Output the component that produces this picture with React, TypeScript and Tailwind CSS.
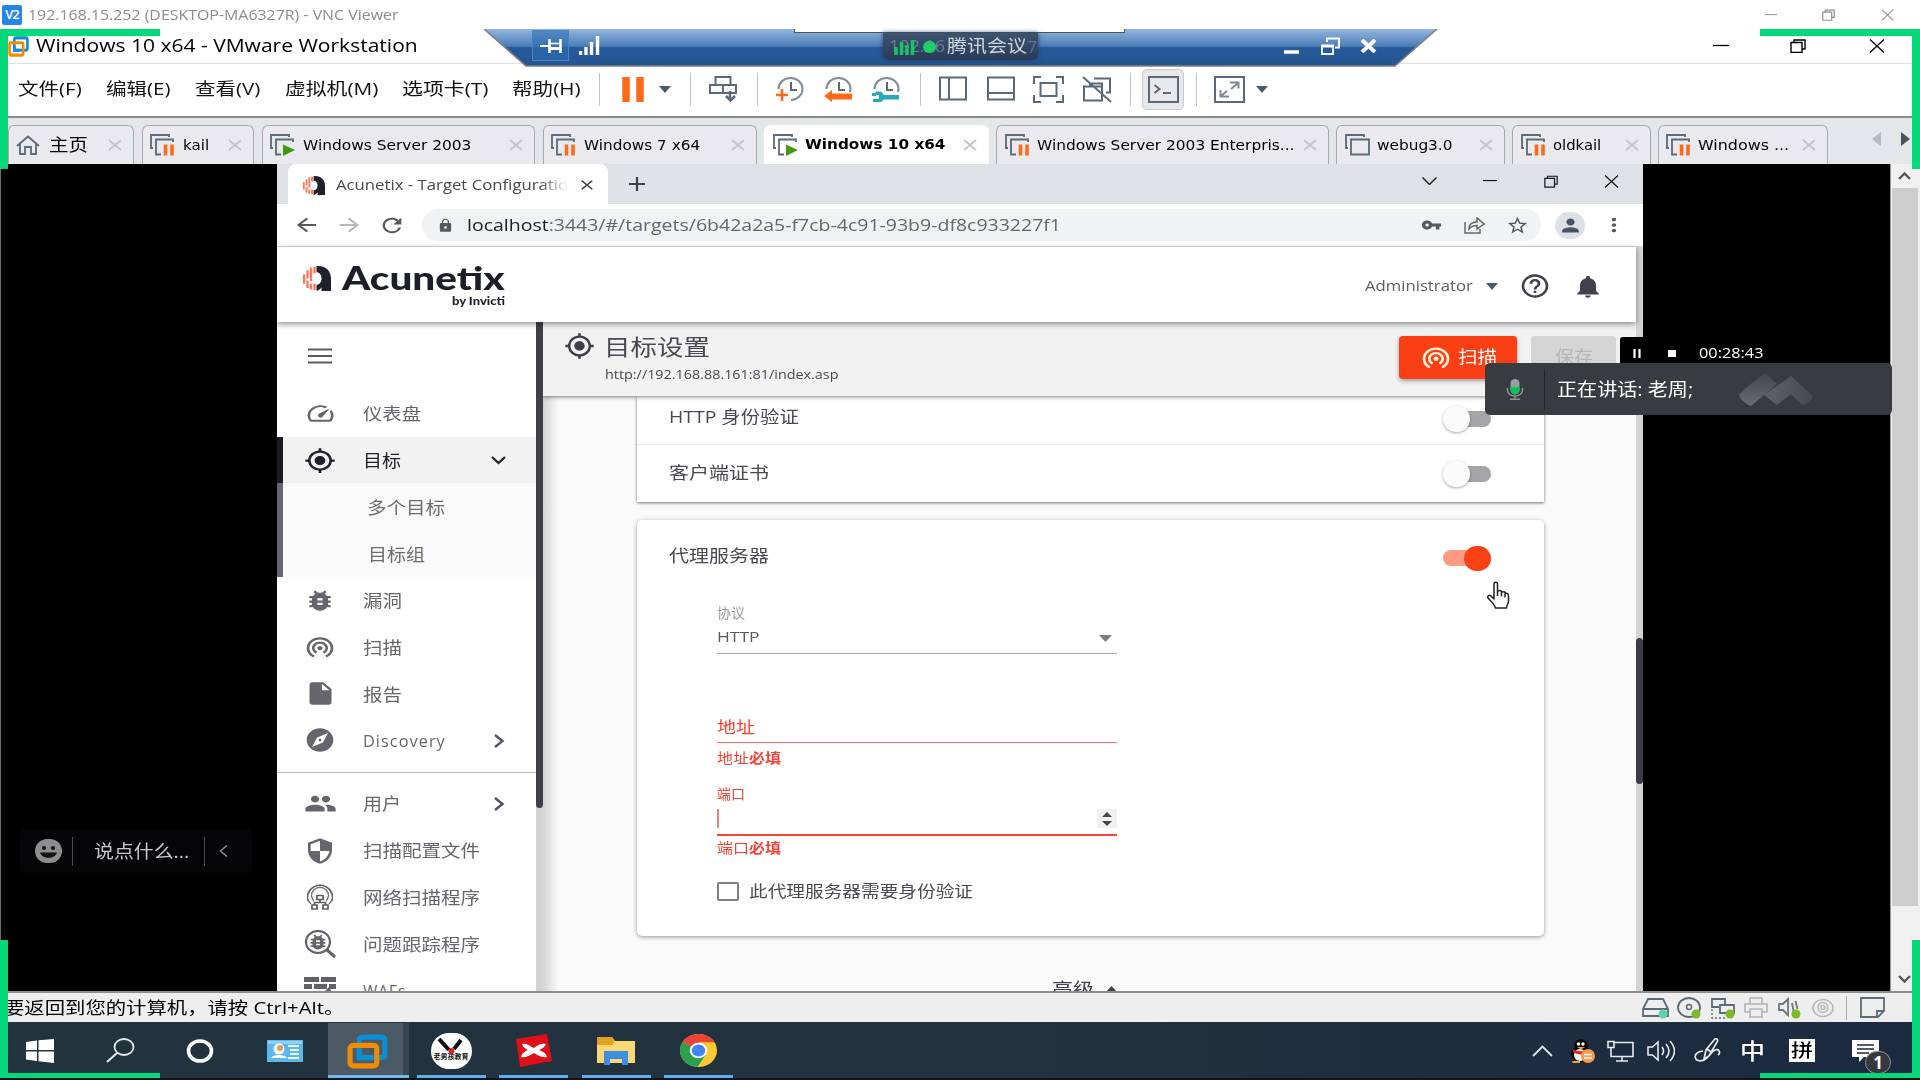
import React, { useLayoutEffect, useRef, useState } from "react";
import {
  MdArrowBack, MdArrowForward, MdBugReport, MdClose, MdExplore, MdGpsFixed, MdGroup, MdHelpOutline,
  MdInsertDriveFile, MdLock, MdMoreVert, MdNotifications, MdPerson, MdRefresh, MdSecurity,
  MdOutlineSpeed, MdStarBorder, MdVpnKey, MdWifiTethering,
} from "react-icons/md";

const sans = "font-['Open_Sans','Noto_Sans_CJK_SC',sans-serif]";
const tahoma = "font-['DejaVu_Sans','Noto_Sans_CJK_SC',sans-serif]";

/** One line of text stretched horizontally to fill the width of its box. */
function Fit({ className = "", children }: { className?: string; children: React.ReactNode }) {
  const box = useRef<HTMLSpanElement>(null);
  const text = useRef<HTMLSpanElement>(null);
  const [scale, setScale] = useState(1);
  useLayoutEffect(() => {
    if (box.current && text.current) setScale(box.current.clientWidth / text.current.offsetWidth);
  }, []);
  return (
    <span ref={box} className={`block shrink-0 leading-none ${className}`}>
      <span ref={text} className="inline-block origin-left whitespace-nowrap leading-[1.3]" style={{ transform: `scaleX(${scale})` }}>
        {children}
      </span>
    </span>
  );
}

function Svg({ w, h, className = "", children }: { w: number; h: number; className?: string; children: React.ReactNode }) {
  return (
    <svg width={w} height={h} viewBox={`0 0 ${w} ${h}`} fill="none" className={`shrink-0 ${className}`}>
      {children}
    </svg>
  );
}

const Minimize = ({ className = "" }) => <Svg w={16} h={16} className={className}><path d="M0 7.500h16" stroke="currentColor" strokeWidth="1.3" /></Svg>;
const Restore = ({ className = "" }) => (
  <Svg w={16} h={14} className={className}><path d="M1 3.5h11v10H1zM4 3V1h11v9h-3" stroke="currentColor" strokeWidth="1.4" /></Svg>
);
const Cross = ({ className = "" }) => <Svg w={16} h={14} className={className}><path d="M1 0.5l14 13M15 0.5L1 13.5" stroke="currentColor" strokeWidth="1.3" /></Svg>;

/* ---------- VNC and VMware title bars ---------- */

function VncTitle() {
  return (
    <div className="flex h-[29px] shrink-0 items-center bg-white text-[#8c8c8c]">
      <div className="ml-[2px] flex h-[20px] w-[20px] items-center justify-center rounded-[2px] bg-[#2486ea]">
        <span className="text-[13px] font-semibold leading-none tracking-[-1px] text-white">V2</span>
      </div>
      <Fit className="ml-[6px] w-[370px] text-[15px]">192.168.15.252 (DESKTOP-MA6327R) - VNC Viewer</Fit>
      <Minimize className="ml-auto h-[12px] w-[12px]" />
      <Restore className="ml-[45px] h-[12px] w-[13px]" />
      <Cross className="mr-[26px] ml-[46px] h-[12px] w-[13px]" />
    </div>
  );
}

function VmwareLogo({ w, h, className = "" }: { w: number; h: number; className?: string }) {
  return (
    <svg width={w} height={h} viewBox="0 0 40 34" preserveAspectRatio="none" fill="none" className={`shrink-0 ${className}`}>
      <rect x="12" y="3" width="25" height="20" rx="3" stroke="#0a8fd6" strokeWidth="5" />
      <rect x="3" y="11" width="26" height="20" rx="3" stroke="#f38b00" strokeWidth="5" />
      <path d="M12 15v8h9" stroke="#0a8fd6" strokeWidth="5" />
    </svg>
  );
}

function VmwareTitle() {
  return (
    <div className="flex h-[35px] shrink-0 items-center border-b border-[#e2e2e2] bg-white text-black">
      <VmwareLogo w={21} h={21} className="ml-[8px]" />
      <Fit className="ml-[7px] w-[382px] text-[18px]">Windows 10 x64 - VMware Workstation</Fit>
      <Minimize className="ml-auto" />
      <Restore className="ml-[61px]" />
      <Cross className="mr-[35px] ml-[63px]" />
    </div>
  );
}

function RdpBar() {
  return (
    <div className="absolute top-[29px] left-[483px] h-[38px] w-[955px]">
      <svg width="955" height="38" className="absolute inset-0">
        <defs>
          <linearGradient id="rdp" x1="0" y1="0" x2="0" y2="1">
            <stop offset="0" stopColor="#92b6df" />
            <stop offset="0.47" stopColor="#4c7db6" />
            <stop offset="0.49" stopColor="#275a9b" />
            <stop offset="1" stopColor="#25548f" />
          </linearGradient>
        </defs>
        <path d="M1 0H954L912 37H43Z" fill="url(#rdp)" />
        <path d="M1 0L43 37H912L954 0" fill="none" stroke="#7d7f84" strokeWidth="1.6" />
      </svg>
      <div className="relative flex h-[33px] items-center">
        <div className="ml-[49px] flex h-[31px] w-[37px] items-center justify-center border border-[#3f86cc] bg-[#2d6cb0]/60">
          <Svg w={22} h={16}><path d="M0 8h9" stroke="white" strokeWidth="2" /><path d="M9.500 1v14M20.500 1v14" stroke="white" strokeWidth="2.600" /><path d="M10 5.500h10" stroke="white" strokeWidth="1.600" /><path d="M10 10.500h10" stroke="white" strokeWidth="3" /></Svg>
        </div>
        <Svg w={22} h={19} className="ml-[10px]"><path d="M1.500 15v4M7 11v8M12.500 6v13M18.500 0v19" stroke="white" strokeWidth="3.400" /></Svg>
        <Svg w={15} h={16} className="ml-[683px]"><path d="M0 14h15" stroke="white" strokeWidth="3.500" /></Svg>
        <Svg w={19} h={18} className="ml-[22px]"><path d="M1 8.500h11v8.500H1zM1 9.500h11M6 5V1.500h12v9h-4" stroke="white" strokeWidth="1.800" /></Svg>
        <Svg w={17} h={14} className="ml-[20px]"><path d="M2 1l13 12M15 1L2 13" stroke="white" strokeWidth="4" /></Svg>
      </div>
      <div className="absolute top-0 left-[311px] h-[4px] w-[331px] border border-t-0 border-[#555] bg-white" />
      <div className="absolute top-[4px] left-[400px] flex h-[27px] w-[155px] items-center rounded-b-[6px] bg-gradient-to-b from-[#3d5470] to-[#263c58] shadow-[0_0_5px_#22406b]">
        <Fit className="absolute left-[6px] w-[56px] text-[17px] text-[#8193a9]/70">192.16</Fit>
        <span className="absolute right-[1px] text-[17px] text-[#8193a9]/60">7</span>
        <Svg w={21} h={16} className="relative ml-[11px]"><path d="M2 8v8M7.500 3v13M13 6v10M18.500 1v15" stroke="#18c465" strokeWidth="3.500" /></Svg>
        <span className="relative ml-[8px] h-[12px] w-[13px] rounded-full bg-[#1fd069]" />
        <Fit className="relative ml-[11px] w-[80px] text-[17px] text-[#cfd5dc]">腾讯会议</Fit>
      </div>
    </div>
  );
}

/* ---------- VMware menu, toolbar and tabs ---------- */

const Sep = ({ className = "" }) => <span className={`h-[33px] w-px shrink-0 bg-[#bfc3c6] ${className}`} />;
const Caret = ({ className = "" }) => <Svg w={12} h={7} className={className}><path d="M0 0h12L6 7z" fill="#4d5b67" /></Svg>;
const line = "#5b6a76";

function Clock({ className, children }: { className: string; children: React.ReactNode }) {
  return (
    <Svg w={28} h={26} className={className}>
      <path d="M2.500 13A12 11 0 1 1 15 24" stroke="#818b94" strokeWidth="2" />
      <path d="M15 6v8h6" stroke={line} strokeWidth="2" />
      {children}
    </Svg>
  );
}

function MenuBar() {
  return (
    <div className="flex h-[54px] shrink-0 items-center border-b-2 border-[#8b8b8b] bg-white pb-[2px] text-[17px] text-[#111]">
      <Fit className="ml-[18px] w-[64px]">文件(F)</Fit>
      <Fit className="ml-[24px] w-[64px]">编辑(E)</Fit>
      <Fit className="ml-[25px] w-[65px]">查看(V)</Fit>
      <Fit className="ml-[25px] w-[93px]">虚拟机(M)</Fit>
      <Fit className="ml-[24px] w-[86px]">选项卡(T)</Fit>
      <Fit className="ml-[24px] w-[69px]">帮助(H)</Fit>
      <Sep className="ml-[18px]" />
      <Svg w={22} h={25} className="ml-[22px]"><path d="M4 0v25M18 0v25" stroke="#ff6a1a" strokeWidth="7.500" /></Svg>
      <Caret className="ml-[15px]" />
      <Sep className="ml-[19px]" />
      <Svg w={29} h={26} className="ml-[18px]">
        <path d="M6.500 1h15v8h-15zM1 9h13v8H1zM14 9h13v8H14z" stroke={line} strokeWidth="2" />
        <path d="M21 15v9M17 20l4.500 4.500L26 20" stroke={line} strokeWidth="2.500" />
      </Svg>
      <Sep className="ml-[19px]" />
      <Clock className="ml-[18px]"><path d="M0 19h12M6 13v12" stroke="#ff6a1a" strokeWidth="2.600" /></Clock>
      <Clock className="ml-[20px]">
        <path d="M0 20h12v6h16v-10h-16z" fill="white" />
        <path d="M0 20l8-6v3.500h20v6H8V26z" fill="#ff6a1a" />
      </Clock>
      <Clock className="ml-[20px]">
        <path d="M0 16h28v10H0z" fill="white" />
        <path d="M0 17h4v3h-4M4 15.500h5l3 3.500h15v4.500H12l-3 2.500H1v-3h6v-4H2z" fill="#27aab8" />
      </Clock>
      <Sep className="ml-[20px]" />
      <Svg w={28} h={26} className="ml-[18px]"><path d="M1 1.500h26v22H1zM10 1.500v22" stroke={line} strokeWidth="2" /></Svg>
      <Svg w={28} h={26} className="ml-[20px]"><path d="M1 1.500h26v22H1zM1 17h26" stroke={line} strokeWidth="2" /></Svg>
      <Svg w={31} h={27} className="ml-[18px]"><path d="M1 8V1h7M23 1h7v7M30 19v7h-7M8 26H1v-7M7.500 7h16v13h-16z" stroke={line} strokeWidth="2" /></Svg>
      <Svg w={30} h={27} className="ml-[18px]"><path d="M12 2.500h16v14h-4M2 10.500h18v14H2zM8 10.500v-3h12v14M1 1l28 25" stroke={line} strokeWidth="2" /></Svg>
      <Sep className="ml-[18px]" />
      <div className="ml-[11px] flex h-[41px] w-[42px] items-center justify-center rounded-[5px] border border-[#c9c9cc] bg-[#e8e8ec]">
        <Svg w={31} h={27}><path d="M1 1h29v25H1z" stroke={line} strokeWidth="2" /><path d="M6.500 9l5 4-5 4M15 17h8" stroke={line} strokeWidth="2" /></Svg>
      </div>
      <Sep className="ml-[12px]" />
      <Svg w={31} h={27} className="ml-[17px]"><path d="M1 1h29v25H1z" stroke={line} strokeWidth="2" /><path d="M16 6.500h8.500v6M24 7l-7 6M6.500 14v6.500H15M7 20l6-5" stroke="#7e8992" strokeWidth="2" /></Svg>
      <Caret className="ml-[11px]" />
    </div>
  );
}

function VmIcon({ state, className = "" }: { state: "pause" | "play" | "off"; className?: string }) {
  return (
    <Svg w={25} h={22} className={className}>
      <path d="M3 14H1V1h18v2" stroke={line} strokeWidth="1.800" />
      {state === "off" ? <path d="M6 5.500h18v15H6z" stroke={line} strokeWidth="1.800" /> : <path d="M11 20.500H6v-15h17V8" stroke={line} strokeWidth="1.800" />}
      {state === "pause" && <path d="M15.500 10.500v11M22 10.500v11" stroke="#ff6a1a" strokeWidth="3.600" />}
      {state === "play" && <path d="M13 10.500l12 5.500-12 6z" fill="#3f9a12" />}
    </Svg>
  );
}

const TabX = ({ className = "" }) => <Svg w={14} h={12} className={`ml-auto ${className}`}><path d="M1 1l12 10M13 1L1 11" stroke="#c3c6c8" strokeWidth="2" /></Svg>;
const tabCls = "flex h-[39px] shrink-0 items-center rounded-t-[6px] border border-b-0 border-[#a7a9ab] bg-[#eaeaee]";

function VmTabs() {
  return (
    <div className={`flex h-[46px] shrink-0 items-end bg-[#e3e7e9] text-[14.5px] text-black ${tahoma}`}>
      <div className={`${tabCls} ml-[8px] w-[126px]`}>
        <Svg w={24} h={20} className="ml-[7px]"><path d="M1 11L12 1.500 23 11M4 9v10h5v-7h6v7h5V9" stroke={line} strokeWidth="1.800" /></Svg>
        <Fit className="ml-[9px] w-[39px] text-[17px]">主页</Fit>
        <TabX className="mr-[11px]" />
      </div>
      <div className={`${tabCls} ml-[8px] w-[112px]`}>
        <VmIcon state="pause" className="ml-[7px]" /><Fit className="ml-[8px] w-[26px]">kail</Fit><TabX className="mr-[11px]" />
      </div>
      <div className={`${tabCls} ml-[8px] w-[273px]`}>
        <VmIcon state="play" className="ml-[7px]" /><Fit className="ml-[8px] w-[168px]">Windows Server 2003</Fit><TabX className="mr-[11px]" />
      </div>
      <div className={`${tabCls} ml-[8px] w-[214px]`}>
        <VmIcon state="pause" className="ml-[7px]" /><Fit className="ml-[8px] w-[116px]">Windows 7 x64</Fit><TabX className="mr-[11px]" />
      </div>
      <div className="ml-[7px] flex h-[39px] w-[225px] shrink-0 items-center rounded-t-[6px] bg-white">
        <VmIcon state="play" className="ml-[9px]" /><Fit className="ml-[7px] w-[140px] font-bold">Windows 10 x64</Fit><TabX className="mr-[12px]" />
      </div>
      <div className={`${tabCls} ml-[7px] w-[333px]`}>
        <VmIcon state="pause" className="ml-[8px]" /><Fit className="ml-[7px] w-[258px]">Windows Server 2003 Enterpris...</Fit><TabX className="mr-[11px]" />
      </div>
      <div className={`${tabCls} ml-[7px] w-[169px]`}>
        <VmIcon state="off" className="ml-[8px]" /><Fit className="ml-[7px] w-[75px]">webug3.0</Fit><TabX className="mr-[11px]" />
      </div>
      <div className={`${tabCls} ml-[7px] w-[139px]`}>
        <VmIcon state="pause" className="ml-[8px]" /><Fit className="ml-[7px] w-[48px]">oldkail</Fit><TabX className="mr-[11px]" />
      </div>
      <div className={`${tabCls} ml-[7px] w-[170px]`}>
        <VmIcon state="pause" className="ml-[7px]" /><Fit className="ml-[7px] w-[91px]">Windows ...</Fit><TabX className="mr-[11px]" />
      </div>
      <div className="ml-[44px] flex h-[50px] items-center gap-[20px]">
        <Svg w={9} h={14}><path d="M9 0v14L0 7z" fill="#b4bbc1" /></Svg>
        <Svg w={9} h={14}><path d="M0 0v14l9-7z" fill="#475562" /></Svg>
      </div>
    </div>
  );
}

/* ---------- Chrome ---------- */

function AcuMark({ w, h, className = "" }: { w: number; h: number; className?: string }) {
  return (
    <svg width={w} height={h} viewBox="0 0 28 24" preserveAspectRatio="none" fill="none" className={`shrink-0 ${className}`}>
      <path d="M1 8v9M4.500 4v8M4.500 14v7M8 1.500v13M8 17v5.500M11.500 1v6M11.500 17v6" stroke="#f9785c" strokeWidth="2.400" />
      <path d="M13.500 0h2C23 0 28 5 28 12v12h-9.500v-3.500c-1.500 2-3 3.500-5 3.500v-6c3 0 5-2.500 5-6s-2-6-5-6z" fill="#1f222d" />
    </svg>
  );
}

function ChromeTabs() {
  return (
    <div className="flex h-[40px] shrink-0 bg-[#dee1e6] text-[#3c4043]">
      <div className="ml-[11px] flex h-[40px] w-[320px] items-center rounded-t-[8px] bg-white pt-[2px]">
        <AcuMark w={22} h={19} className="ml-[15px]" />
        <Fit className="ml-[11px] w-[232px] text-[15px] text-[#45494d] [mask-image:linear-gradient(to_right,black_88%,transparent)]">Acunetix - Target Configuratio</Fit>
        <MdClose preserveAspectRatio="none" className="ml-[9px] h-[16px] w-[20px]" />
      </div>
      <Svg w={16} h={14} className="mt-[13px] ml-[21px]"><path d="M0 7h16M8 0v14" stroke="#3c4043" strokeWidth="2.200" /></Svg>
      <div className="ml-auto flex h-[34px] items-center text-[#15171a]">
        <Svg w={15} h={8}><path d="M0.500 0.500l7 7 7-7" stroke="currentColor" strokeWidth="1.400" /></Svg>
        <Minimize className="ml-[46px] w-[14px]" />
        <Restore className="ml-[47px] h-[13px] w-[14px]" />
        <Cross className="mr-[24px] ml-[46px] h-[13px] w-[15px]" />
      </div>
    </div>
  );
}

function ChromeToolbar() {
  return (
    <div className="flex h-[43px] shrink-0 items-center border-b border-[#dadce0] bg-white text-[#55595e]">
      <MdArrowBack preserveAspectRatio="none" className="ml-[15px] h-[22px] w-[29px]" />
      <MdArrowForward preserveAspectRatio="none" className="ml-[14px] h-[22px] w-[29px] text-[#b5b7ba]" />
      <MdRefresh preserveAspectRatio="none" className="ml-[14px] h-[23px] w-[28px]" />
      <div className="ml-[16px] flex h-[32px] w-[1119px] items-center rounded-full bg-[#f1f2f3]">
        <MdLock preserveAspectRatio="none" className="ml-[15px] h-[15px] w-[17px]" />
        <Fit className="ml-[13px] w-[594px] text-[17px] text-[#63676c]"><span className="text-[#202124]">localhost</span>:3443/#/targets/6b42a2a5-f7cb-4c91-93b9-df8c933227f1</Fit>
        <MdVpnKey preserveAspectRatio="none" className="ml-auto h-[18px] w-[21px]" />
        <Svg w={21} h={17} className="ml-[22px]"><path d="M1 5v11h15v-4M5 12c0-5 3-7 8-7V1l7 6-7 5V8.500c-4 0-6 1-8 3.500z" stroke="#63676c" strokeWidth="1.500" /></Svg>
        <MdStarBorder preserveAspectRatio="none" className="mr-[12px] ml-[21px] h-[21px] w-[23px]" />
      </div>
      <span className="ml-[14px] flex h-[27px] w-[30px] items-center justify-center rounded-full bg-[#dde1e6]">
        <MdPerson preserveAspectRatio="none" className="h-[21px] w-[25px] text-[#4a5468]" />
      </span>
      <MdMoreVert preserveAspectRatio="none" className="ml-[16px] h-[22px] w-[26px]" />
    </div>
  );
}

function AppHeader() {
  return (
    <div className="relative z-20 flex h-[75px] w-[1359px] shrink-0 bg-white shadow-[0_2px_6px_rgba(0,0,0,0.45)]">
      <AcuMark w={28} h={25} className="mt-[19px] ml-[26px]" />
      <div className="mt-[10px] ml-[11px] w-[163px] font-['Lato','Noto_Sans',sans-serif] text-[#1c1e29]">
        <Fit className="w-[163px] text-[32px] font-black">Acunetix</Fit>
        <Fit className="mt-[-6px] ml-[110px] w-[53px] text-[12px] font-black">by Invicti</Fit>
      </div>
      <div className="mr-[32px] ml-auto flex h-[78px] items-center text-[#41404d]">
        <Fit className="w-[108px] text-[15px] text-[#5d5c66]">Administrator</Fit>
        <Caret className="ml-[13px]" />
        <MdHelpOutline preserveAspectRatio="none" className="ml-[21px] h-[28px] w-[32px]" />
        <MdNotifications preserveAspectRatio="none" className="ml-[21px] h-[27px] w-[32px]" />
      </div>
    </div>
  );
}

/* ---------- Sidebar ---------- */

const NetScan = () => (
  <Svg w={28} h={26}>
    <path d="M5 20A12.500 11 0 1 1 23 20M8 17A8.500 8 0 1 1 20 17M2 17A13.500 13 0 0 1 14 1A13.500 13 0 0 1 26 17" stroke="#67666f" strokeWidth="1.300" />
    <path d="M11 11.500h6v4h-6zM14 15.500v3M8.500 20.500v-2h11v2M6 21h5v4H6zM17 21h5v4h-5z" stroke="#5c5b65" strokeWidth="1.700" />
  </Svg>
);
const BugSearch = () => (
  <span className="relative h-[28px] w-[32px]">
    <Svg w={32} h={28}><ellipse cx="14" cy="12" rx="12" ry="11" stroke="#62616a" strokeWidth="2.200" /><path d="M23 20l8 7" stroke="#62616a" strokeWidth="3" /></Svg>
    <MdBugReport preserveAspectRatio="none" className="absolute top-[2px] left-[3px] h-[20px] w-[22px]" />
  </span>
);
const Wall = () => (
  <Svg w={32} h={28}>
    <path d="M0 0h15v5H0zM17 0h15v5H17zM0 7h8v5H0zM10 7h13v5H10zM25 7h7v5h-7zM0 14h15v5H0zM17 14h4l4-4 5 9H17z" fill="#62616a" />
  </Svg>
);

function NavRow({ icon, children, width, arrow }: { icon: React.ReactNode; children: React.ReactNode; width: string; arrow?: boolean }) {
  return (
    <div className="flex h-[46.800px] shrink-0 items-center text-[#66656e]">
      <span className="ml-[24px] flex w-[38px] justify-center">{icon}</span>
      <Fit className={`ml-[24px] text-[17px] ${width}`}>{children}</Fit>
      {arrow && <Svg w={12} h={14} className="mr-[31px] ml-auto"><path d="M2 1l7.500 6L2 13" stroke="#55545e" strokeWidth="2.400" /></Svg>}
    </div>
  );
}

function Sidebar() {
  return (
    <div className="flex w-[266px] shrink-0 bg-white">
      <div className="flex h-full w-[259px] flex-col overflow-hidden">
        <div className="flex h-[68px] shrink-0 items-center">
          <Svg w={24} h={16} className="ml-[31px]"><path d="M0 1.500h24M0 8h24M0 14.500h24" stroke="#5b5a64" strokeWidth="2.200" /></Svg>
        </div>
        <NavRow icon={<MdOutlineSpeed preserveAspectRatio="none" className="h-[25px] w-[31px]" />} width="w-[58px] mt-[2px]">仪表盘</NavRow>
        <div className="flex h-[46.500px] shrink-0 items-center border-l-[6px] border-[#1c1a26] bg-[#f2f2f2] text-[#22202c]">
          <MdGpsFixed preserveAspectRatio="none" className="ml-[21px] h-[27px] w-[32px]" />
          <Fit className="mt-[2px] ml-[27px] w-[38px] text-[17px]">目标</Fit>
          <Svg w={15} h={9} className="mr-[30px] ml-auto"><path d="M1 1l6.500 6L14 1" stroke="#22202c" strokeWidth="2.300" /></Svg>
        </div>
        <div className="flex h-[94px] shrink-0 flex-col border-l-[6px] border-[#67656e] bg-[#fafafa] text-[17px] text-[#6c6b74]">
          <div className="flex h-[47px] items-center pt-[2px]"><Fit className="ml-[84px] w-[78px]">多个目标</Fit></div>
          <div className="flex h-[47px] items-center pt-[2px]"><Fit className="ml-[85px] w-[57px]">目标组</Fit></div>
        </div>
        <NavRow icon={<MdBugReport preserveAspectRatio="none" className="h-[27px] w-[32px]" />} width="w-[39px] mt-[1px]">漏洞</NavRow>
        <NavRow icon={<MdWifiTethering preserveAspectRatio="none" className="h-[26px] w-[32px]" />} width="w-[39px] mt-[2px]">扫描</NavRow>
        <NavRow icon={<MdInsertDriveFile preserveAspectRatio="none" className="h-[27px] w-[33px] mb-[2px]" />} width="w-[39px] mt-[2px]">报告</NavRow>
        <NavRow icon={<MdExplore preserveAspectRatio="none" className="h-[28px] w-[32px] mb-[2px]" />} width="w-[83px]" arrow><span className="text-[15.500px] tracking-[1px]">Discovery</span></NavRow>
        <div className="mt-[8px] mb-[7px] h-px shrink-0 bg-[#bdbdc0]" />
        <NavRow icon={<MdGroup preserveAspectRatio="none" className="h-[27px] w-[33px]" />} width="w-[38px]" arrow>用户</NavRow>
        <NavRow icon={<MdSecurity preserveAspectRatio="none" className="h-[28px] w-[32px]" />} width="w-[117px] mt-[1px]">扫描配置文件</NavRow>
        <NavRow icon={<NetScan />} width="w-[117px] mt-[2px]">网络扫描程序</NavRow>
        <NavRow icon={<BugSearch />} width="w-[117px] mt-[2px]">问题跟踪程序</NavRow>
        <NavRow icon={<Wall />} width="w-[44px]"><span className="text-[15.500px] tracking-[1px]">WAFs</span></NavRow>
      </div>
      <div className="h-full w-[7px] bg-[#d3d3d4]"><div className="h-[486px] rounded-b-full bg-[#423f4a]" /></div>
    </div>
  );
}

/* ---------- Target configuration ---------- */

const ToggleOff = () => (
  <span className="mr-[53px] ml-auto flex h-[26px] w-[48px] items-center rounded-full">
    <span className="z-10 h-[26px] w-[27px] shrink-0 rounded-full bg-[#fbfbfb] shadow-[0_1px_3px_rgba(0,0,0,0.35)]" />
    <span className="ml-[-4px] h-[16px] w-[25px] rounded-r-full bg-[#a5a4a9]" />
  </span>
);

function Content() {
  return (
    <div className="flex min-w-0 flex-1 flex-col overflow-hidden bg-[#fafafa]">
      <div className="relative z-10 flex h-[74px] shrink-0 bg-[#f2f2f2] shadow-[0_1px_4px_rgba(0,0,0,0.5)]">
        <MdGpsFixed preserveAspectRatio="none" className="mt-[10px] ml-[21px] h-[28px] w-[31px] text-[#3f3d49]" />
        <div className="mt-[10px] ml-[10px] w-[240px] text-[#494853]">
          <Fit className="ml-[-1px] w-[106px] text-[22px]">目标设置</Fit>
          <Fit className="mt-[5px] w-[233px] text-[13.500px]">http://192.168.88.161:81/index.asp</Fit>
        </div>
        <div className="mt-[14px] ml-auto flex h-[43px] w-[118px] items-center rounded-[4px] bg-[#fa3f14] text-white shadow-[0_2px_4px_rgba(0,0,0,0.35)]">
          <MdWifiTethering preserveAspectRatio="none" className="ml-[21px] h-[27px] w-[32px] text-[#fff3d8]" />
          <Fit className="ml-[6px] w-[39px] text-[17px]">扫描</Fit>
        </div>
        <div className="mt-[14px] mr-[20px] ml-[14px] flex h-[43px] w-[85px] items-center rounded-[3px] bg-[#d5d5d5] pl-[24px]">
          <Fit className="w-[38px] text-[17px] text-[#b5b5b5]">保存</Fit>
        </div>
      </div>
      <div className="ml-[94px] w-[907px] shrink-0 bg-white text-[#494854] shadow-[0_1px_3px_rgba(0,0,0,0.55)]">
        <div className="flex h-[49px] items-center border-b border-[#ededed] pb-[6px] pl-[32px]"><Fit className="w-[130px] text-[17px]">HTTP 身份验证</Fit><span className="mt-[3px] ml-auto flex"><ToggleOff /></span></div>
        <div className="flex h-[57px] items-center pl-[32px]"><Fit className="mb-px w-[100px] text-[17px]">客户端证书</Fit><ToggleOff /></div>
      </div>
      <div className="mt-[18px] ml-[94px] flex h-[416px] w-[907px] shrink-0 flex-col rounded-[5px] bg-white text-[#494854] shadow-[0_1px_4px_rgba(0,0,0,0.4)]">
        <div className="flex h-[76px] shrink-0 items-center pl-[32px]">
          <Fit className="mb-[4px] w-[100px] text-[17px]">代理服务器</Fit>
          <span className="mr-[53px] ml-auto flex items-center">
            <span className="h-[16px] w-[25px] rounded-l-full bg-[#ff9a85]" />
            <span className="ml-[-4px] h-[25px] w-[27px] rounded-full bg-[#fa4116]" />
          </span>
        </div>
        <div className="ml-[80px] flex w-[400px] flex-col">
          <Fit className="mt-[9px] w-[28px] text-[13.500px] text-[#9b9a9f]">协议</Fit>
          <div className="mt-[4px] flex h-[27px] items-start border-b-[1.500px] border-[#a9a9ab]">
            <Fit className="w-[43px] text-[15px] text-[#5b5964]">HTTP</Fit>
            <Svg w={13} h={7} className="mt-[8px] mr-[5px] ml-auto"><path d="M0 0h13L6.500 7z" fill="#7d7c81" /></Svg>
          </div>
          <div className="mt-[63px] flex h-[26px] items-start border-b-[1.500px] border-[#ff6f63] text-[#f44336]"><Fit className="w-[38px] text-[16px]">地址</Fit></div>
          <Fit className="mt-[6px] w-[64px] text-[14px] text-[#f44336]">地址<b>必填</b></Fit>
          <Fit className="mt-[19px] w-[28px] text-[13.500px] text-[#f44336]">端口</Fit>
          <div className="mt-[5px] flex h-[28px] items-start justify-between border-b-2 border-[#f8443a]">
            <span className="mt-px h-[19px] w-[2px] bg-[#e8837c]" />
            <span className="mt-px flex h-[19px] w-[20px] flex-col items-center justify-center gap-[4px] bg-[#f1f1f1]">
              <Svg w={10} h={5}><path d="M0 5h10L5 0z" fill="#47464c" /></Svg>
              <Svg w={10} h={5}><path d="M0 0h10L5 5z" fill="#47464c" /></Svg>
            </span>
          </div>
          <Fit className="mt-[3px] w-[64px] text-[14px] text-[#f44336]">端口<b>必填</b></Fit>
          <div className="mt-[24px] flex items-center">
            <span className="h-[19px] w-[22px] rounded-[2px] border-2 border-[#808080]" />
            <Fit className="ml-[10px] w-[224px] text-[16px] text-[#4a4955]">此代理服务器需要身份验证</Fit>
          </div>
        </div>
      </div>
      <div className="mt-[42px] ml-[509px] flex items-center gap-[11px]">
        <Fit className="w-[42px] text-[17px] text-[#41404d]">高级</Fit>
        <Svg w={13} h={7}><path d="M0 7h13L6.500 0z" fill="#41404d" /></Svg>
      </div>
    </div>
  );
}

function Browser() {
  return (
    <div className="flex h-full w-[1366px] shrink-0 flex-col overflow-hidden bg-white">
      <ChromeTabs />
      <ChromeToolbar />
      <div className="flex min-h-0 flex-1 bg-[#d4d4d5]">
        <div className="flex w-[1359px] flex-col">
          <AppHeader />
          <div className="flex min-h-0 flex-1">
            <Sidebar />
            <div className="relative flex min-w-0 flex-1">
              <Content />
              <div className="pointer-events-none absolute inset-y-0 left-0 w-[16px] bg-gradient-to-r from-black/15 to-transparent" />
            </div>
          </div>
        </div>
        <div className="mt-[391px] h-[146px] w-[7px] rounded-full bg-[#3d3b47]" />
      </div>
    </div>
  );
}

function GuestScreen() {
  return (
    <div className="isolate flex h-[827px] shrink-0 border-l border-[#6d6d6d] bg-black">
      <div className="w-[276px] shrink-0" />
      <Browser />
      <div className="flex-1" />
      <div className="flex h-full w-[30px] flex-col items-center border-l border-[#999] bg-[#f0f0f0] pr-[2px]">
        <div className="flex h-[24px] items-center"><Svg w={13} h={8}><path d="M1 7l5.500-5.500L12 7" stroke="#555" strokeWidth="2.400" /></Svg></div>
        <div className="h-[718px] w-[26px] bg-[#cdcdcd]" />
        <div className="mt-auto flex h-[24px] items-center"><Svg w={13} h={8}><path d="M1 1l5.500 5.500L12 1" stroke="#555" strokeWidth="2.400" /></Svg></div>
      </div>
    </div>
  );
}

/* ---------- Status bar and taskbar ---------- */

function StatusBar() {
  const g = "#6d767e";
  return (
    <div className="flex h-[31px] shrink-0 items-center overflow-hidden border-t-2 border-[#8c8c8c] bg-[#eee] text-black">
      <Fit className="mt-[2px] ml-[4px] w-[340px] text-[17px]">要返回到您的计算机，请按 Ctrl+Alt。</Fit>
      <Svg w={27} h={22} className="ml-auto"><path d="M6 2h15l5 10v7H1v-7zM1 12h25" stroke="#5b6a76" strokeWidth="1.800" /><circle cx="21" cy="17" r="4.500" fill="#5fd3b0" /></Svg>
      <Svg w={25} h={22} className="ml-[8px]"><ellipse cx="12" cy="10.500" rx="11" ry="9.500" stroke="#5b6a76" strokeWidth="1.800" /><circle cx="12" cy="10" r="2.500" stroke="#5b6a76" strokeWidth="1.500" /><circle cx="19" cy="17" r="4.500" fill="#7db928" /></Svg>
      <Svg w={26} h={22} className="ml-[8px]"><path d="M9 10H2V2h13v5M10 8h14v8H10z" stroke="#5b6a76" strokeWidth="1.800" /><path d="M2 12v9h14" stroke="#5b6a76" strokeWidth="1.400" strokeDasharray="2 2" /><circle cx="20" cy="17" r="4.500" fill="#7db928" /></Svg>
      <Svg w={24} h={22} className="ml-[8px]"><path d="M6 7V1h12v6M5 15H1V7h22v8h-4M6 12h12v8H6z" stroke="#b0b3b6" strokeWidth="1.600" /></Svg>
      <Svg w={24} h={22} className="ml-[10px]"><path d="M1 7h4l5-5v16l-5-5H1zM14 6l1.500 8M17.500 4l2 8" stroke={g} strokeWidth="1.800" /><circle cx="18" cy="17" r="4.500" fill="#7db928" /></Svg>
      <Svg w={22} h={20} className="ml-[10px]"><ellipse cx="11" cy="10" rx="10" ry="8.500" stroke="#b6b9bb" strokeWidth="1.600" /><circle cx="11" cy="9.500" r="5" stroke="#b6b9bb" strokeWidth="1.500" /><circle cx="11" cy="9.500" r="2" stroke="#b6b9bb" strokeWidth="1.500" /></Svg>
      <span className="ml-[12px] h-[24px] w-px bg-[#a8a8a8]" />
      <Svg w={25} h={21} className="mr-[35px] ml-[13px]"><path d="M1 1h23v13l-6 6H1zM17 20v-6h7" stroke="#5b6a76" strokeWidth="1.800" /></Svg>
    </div>
  );
}

const slot = "flex h-full w-[69px] shrink-0 items-center justify-center border-b-[3px] border-[#63aee6] pt-[3px]";

function Taskbar() {
  return (
    <div className="flex h-[56px] shrink-0 items-center bg-gradient-to-r from-[#21343e] via-[#22323f] to-[#1b2a3f] pt-px">
      <Svg w={28} h={24} className="ml-[26px]"><path d="M0 3l11-1.500V11H0zM12.500 1.300L28 0v11H12.500zM0 12.500h11V22L0 20.500zM12.500 12.500H28V24l-15.500-1.700z" fill="white" /></Svg>
      <Svg w={29} h={25} className="ml-[52px]"><ellipse cx="18" cy="9" rx="9.500" ry="8" stroke="#e6eaec" strokeWidth="1.800" /><path d="M11 15L1 24" stroke="#e6eaec" strokeWidth="2" /></Svg>
      <Svg w={28} h={24} className="ml-[51px]"><ellipse cx="14" cy="12" rx="11.500" ry="10" stroke="white" strokeWidth="3.600" /></Svg>
      <Svg w={36} h={22} className="ml-[53px]">
        <rect width="36" height="22" fill="#5db9ec" /><rect x="1" y="1" width="34" height="3" fill="#8fd2f5" />
        <circle cx="12" cy="9" r="5.500" fill="#f2f6f8" /><circle cx="13" cy="8" r="3" fill="#e0a254" /><path d="M4 18c2-4 14-4 16 0z" fill="white" />
        <path d="M21 6h11M23 10h9M23 14h9M21 18h11" stroke="#e8f7ff" strokeWidth="1.800" />
      </Svg>
      <div className="ml-[25px] flex h-full w-[75px] shrink-0 items-center justify-center border-b-[3px] border-[#76b9ed] bg-[#4b5a65]"><VmwareLogo w={41} h={35} className="mt-[5px] ml-[4px]" /></div>
      <div className="h-full w-[6px] border-b-[3px] border-[#76b9ed] bg-[#38474f]" />
      <div className={`ml-[8px] ${slot}`}>
        <span className="relative mr-px flex h-[36px] w-[41px] flex-col items-center overflow-hidden rounded-full bg-white">
          <Svg w={28} h={20} className="mt-[5px]"><path d="M2 1l10 11M24 2l-7 9" stroke="#111" strokeWidth="4" /><circle cx="14.500" cy="13" r="3" fill="#d8232a" /></Svg>
          <span className="mt-[-5px] text-[7px] leading-[8px] font-bold whitespace-nowrap text-[#222]">老男孩教育</span>
        </span>
      </div>
      <div className={`ml-[13px] ${slot}`}>
        <Svg w={38} h={33}><path d="M1 5L32 0l5 27L5 33z" fill="#e01016" /><path d="M7 10c6-1 8 3 12 4 3-2 6-5 12-4-1 3-4 5-7 6 3 1 7 3 8 7-6 1-9-2-13-4-4 2-7 5-13 4 1-4 4-6 7-7-3-1-5-3-6-6z" fill="white" /></Svg>
      </div>
      <div className={`ml-[14px] ${slot}`}>
        <Svg w={38} h={29} className="mr-[2px]"><path d="M0 1h15l3 4h20v22H0z" fill="#fbd775" /><path d="M0 1h15l3 4-3 4H0z" fill="#dfa324" /><path d="M7 29V15h24v14h-6v-6H13v6z" fill="#3d8ede" /></Svg>
      </div>
      <div className={`ml-[13px] ${slot}`}>
        <svg width="37" height="33" viewBox="0 0 36 36" preserveAspectRatio="none">
          <circle cx="18" cy="18" r="18" fill="#fcc934" />
          <path d="M18 18L2.400 9A18 18 0 0 1 33.600 9H18z" fill="#e94436" />
          <path d="M18 18L2.400 9A18 18 0 0 0 17 36l8-13z" fill="#2da04f" />
          <circle cx="18" cy="18" r="8.500" fill="white" /><circle cx="18" cy="18" r="6.600" fill="#4285f4" />
        </svg>
      </div>
      <Svg w={21} h={12} className="ml-auto"><path d="M1 11L10.500 1.500 20 11" stroke="#dfe5ea" strokeWidth="1.800" /></Svg>
      <Svg w={25} h={24} className="ml-[17px]">
        <ellipse cx="11" cy="7" rx="7" ry="7" fill="#0c0c0e" /><ellipse cx="11" cy="15" rx="10" ry="8" fill="#0c0c0e" /><ellipse cx="10" cy="16" rx="6" ry="6" fill="#f5f5f5" />
        <circle cx="8.500" cy="5" r="1.700" fill="white" /><circle cx="13" cy="5" r="1.700" fill="white" /><path d="M7 8h8l-4 2.500z" fill="#f5a11a" /><path d="M3 10c4 3 11 3 15 0v4C13 16 7 16 3 13z" fill="#de2a22" />
        <path d="M2 22h8v2H3z" fill="#f0a41c" /><circle cx="18" cy="17" r="7" fill="#fa9a4c" /><path d="M14 15.500h8M14 19h8" stroke="white" strokeWidth="1.500" />
      </Svg>
      <Svg w={27} h={22} className="ml-[12px]"><path d="M6 2.500h20v14H4V10M15 17v4M9 21h12M1 1.500h6v6H1zM4 8v3" stroke="#e6ebef" strokeWidth="1.600" /></Svg>
      <Svg w={28} h={22} className="ml-[13px]"><path d="M1 7h4.500L11 2v18l-5.500-5H1zM15 7q3 4 0 8M19 4q6 7 0 14M23 1q9 10 0 20" stroke="#e6ebef" strokeWidth="1.600" /></Svg>
      <Svg w={28} h={25} className="ml-[19px]"><path d="M10 21l2-9 8-10c2-3 5 0 3 2L15 18zM9 13c-12 1-9 13 1 9 5-3 8-9 11-10 4-2 6 3 3 5M13 11l5 4" stroke="#e6ebef" strokeWidth="1.700" /></Svg>
      <Fit className="ml-[18px] w-[25px] text-[22px] font-medium text-white">中</Fit>
      <span className="ml-[24px] flex h-[23px] w-[26px] items-center justify-center bg-white"><Fit className="w-[22px] text-[18px] font-medium text-black">拼</Fit></span>
      <span className="relative mr-[41px] ml-[37px] h-[22px] w-[27px]">
        <Svg w={27} h={22}><path d="M0 0h27v17H12l-5 5v-5H0z" fill="white" /><path d="M5 5h17M5 9h17M5 13h12" stroke="#1c2a3b" strokeWidth="1.600" /></Svg>
        <span className="absolute top-[11px] left-[13px] flex h-[23px] w-[26px] items-center justify-center rounded-full border border-[#8d9297] bg-[#35393e] text-[17px] leading-none font-bold text-white">1</span>
      </span>
    </div>
  );
}

/* ---------- Floating overlays ---------- */

function RecorderBar() {
  return (
    <div className="absolute top-[337px] left-[1620px] flex h-[30px] w-[150px] items-center rounded-tl-[3px] bg-black pt-[2px]">
      <Svg w={9} h={9} className="ml-[13px]"><path d="M1.500 0v9M6.500 0v9" stroke="white" strokeWidth="2.200" /></Svg>
      <span className="ml-[26px] h-[7px] w-[8px] bg-white" />
      <Fit className="ml-[23px] w-[64px] text-[14px] text-white">00:28:43</Fit>
    </div>
  );
}

function SpeakerBar() {
  return (
    <div className="absolute top-[363px] left-[1485px] flex h-[52px] w-[407px] items-center rounded-[5px] bg-[#383b40]">
      <Svg w={18} h={21} className="ml-[21px]">
        <rect x="4.500" y="0" width="9" height="15" rx="4.500" fill="#9a9ca0" /><path d="M4.500 8h9v3a4.500 4.500 0 0 1-9 0z" fill="#10c260" />
        <path d="M1.500 9v2c0 8 15 8 15 0V9M9 17v3M4 20.300h10" stroke="#8f9195" strokeWidth="1.500" />
      </Svg>
      <span className="ml-[20px] h-[41px] w-px bg-[#24262a]" />
      <Fit className="mt-[2px] ml-[12px] w-[136px] text-[18px] text-white">正在讲话: 老周;</Fit>
      <Svg w={76} h={36} className="ml-[45px]">
        <defs>
          <linearGradient id="tm" x1="0" x2="0" y1="0" y2="1"><stop offset="0" stopColor="#44474b" /><stop offset="1" stopColor="#77797c" /></linearGradient>
          <linearGradient id="tm2" x1="0" x2="1"><stop offset="0" stopColor="#6b6d70" /><stop offset="1" stopColor="#484b4f" /></linearGradient>
        </defs>
        <path d="M1 24Q3 20 27 2l12 11-26 22Q3 31 1 24z" fill="url(#tm)" opacity="0.800" />
        <path d="M26 24L53 5l22 20q-2 7-11 9l-11-11-14 11z" fill="url(#tm2)" opacity="0.800" />
      </Svg>
    </div>
  );
}

function CommentBar() {
  return (
    <div className="absolute top-[829px] left-[20px] flex h-[44px] w-[232px] items-center rounded-[4px] bg-[#050508]">
      <span className="ml-[15px] flex h-[24px] w-[27px] flex-col items-center rounded-full bg-[#8d8d8d]">
        <Svg w={27} h={24}><circle cx="9" cy="9" r="2" fill="#111" /><circle cx="18" cy="9" r="2" fill="#111" /><path d="M5 13.500h17c-2 7-15 7-17 0z" fill="#111" /></Svg>
      </span>
      <span className="ml-[10px] h-[29px] w-px bg-[#4a4a4c]" />
      <Fit className="mt-[2px] ml-[21px] w-[95px] text-[18px] text-[#c9c9c9]">说点什么...</Fit>
      <span className="ml-[15px] h-[29px] w-px bg-[#4a4a4c]" />
      <Svg w={9} h={12} className="ml-[14px]"><path d="M8 0.500L1.500 6 8 11.500" stroke="#8b8b8b" strokeWidth="1.600" /></Svg>
    </div>
  );
}

function HandCursor() {
  return (
    <Svg w={24} h={28} className="absolute top-[581px] left-[1486px]">
      <path d="M8 18V3c0-2.500 3.500-2.500 3.500 0v7c3-1 4 0 4 1 3-1 4 .500 4 1.500 2-.500 3 .500 3 2.500v5c0 3-2 4-2 7H9.500c-1-4-5-7-7.500-10-1-2 1-3.500 3-2zM11.500 10v5M15.500 11.500v4M19 12.500v4" fill="white" stroke="#222" strokeWidth="1.500" strokeLinejoin="round" />
    </Svg>
  );
}

function ShareFrame() {
  const corner = "pointer-events-none absolute border-[#04d87b] w-[160px]";
  return (
    <>
      <div className={`${corner} top-[29px] left-0 h-[140px] border-t-[7px] border-l-[8px]`} />
      <div className={`${corner} top-[29px] right-0 h-[140px] border-t-[7px] border-r-[8px]`} />
      <div className={`${corner} top-[940px] left-0 h-[138px] border-b-[5px] border-l-[8px]`} />
      <div className={`${corner} top-[940px] right-0 h-[138px] border-r-[8px] border-b-[5px]`} />
    </>
  );
}

export default function App() {
  return (
    <div className={`relative flex h-[1080px] w-[1920px] flex-col overflow-hidden bg-[#10161b] ${sans}`}>
      <VncTitle />
      <VmwareTitle />
      <MenuBar />
      <VmTabs />
      <GuestScreen />
      <StatusBar />
      <Taskbar />
      <RdpBar />
      <RecorderBar />
      <SpeakerBar />
      <CommentBar />
      <HandCursor />
      <ShareFrame />
    </div>
  );
}
